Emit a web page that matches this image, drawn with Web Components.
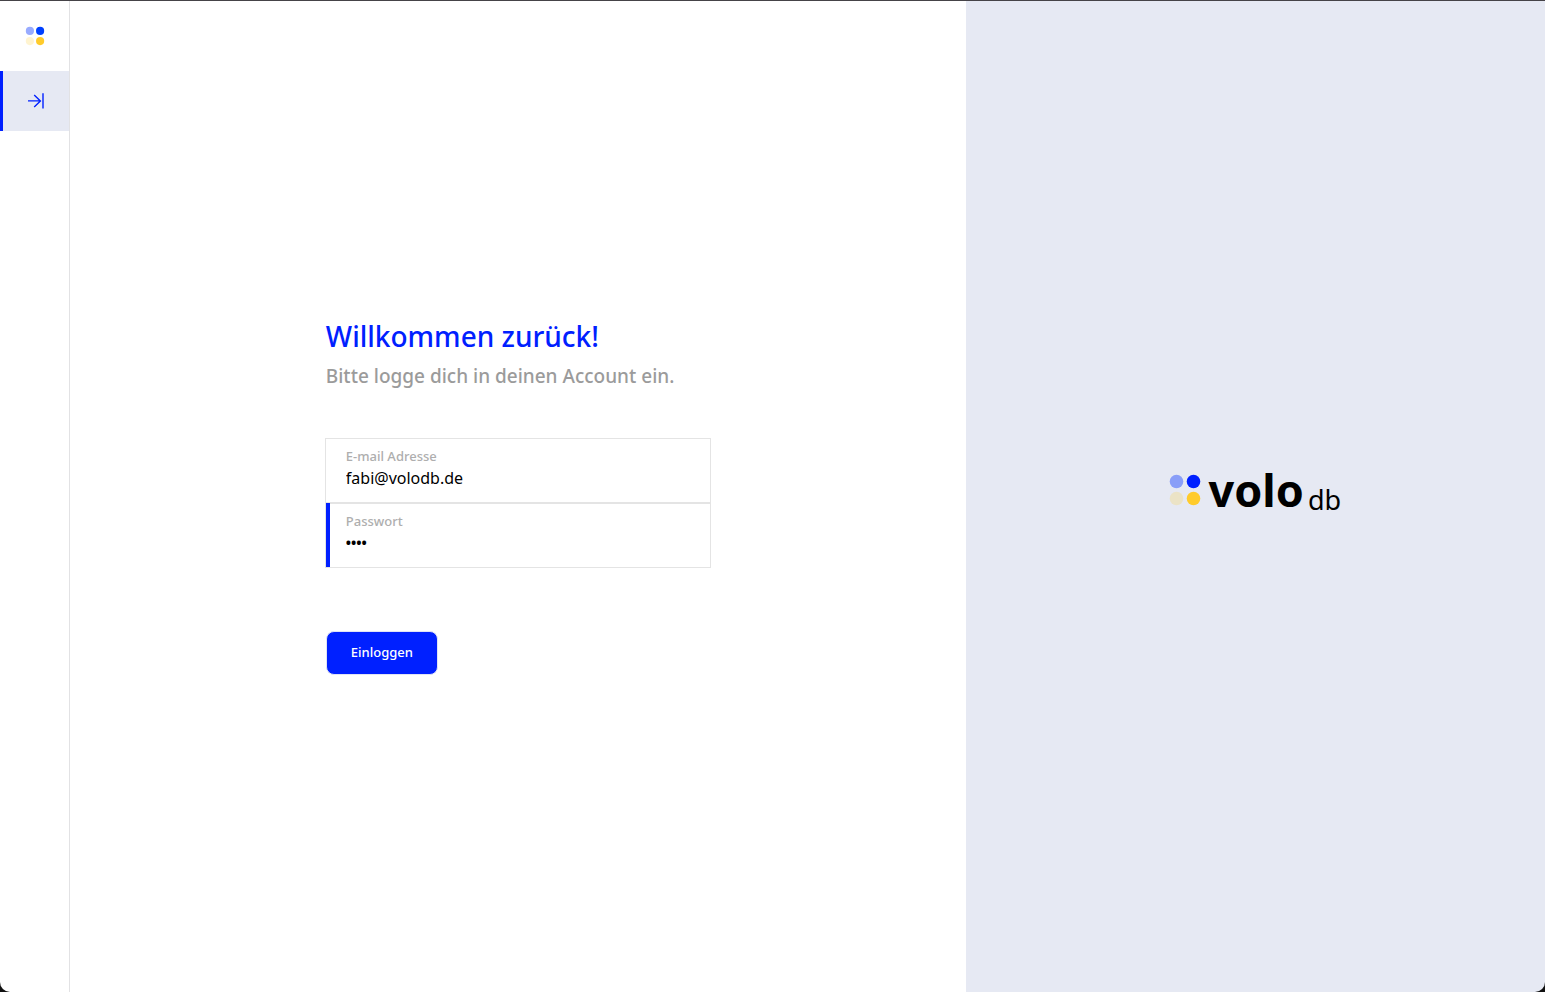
<!DOCTYPE html>
<html lang="de">
<head>
<meta charset="utf-8">
<title>volo db – Login</title>
<style>
  html { height: 100%; background: #111; }
  body { margin: 0; height: 100%; font-family: "Noto Sans", "Open Sans", sans-serif; color: #000; }
</style>
</head>
<body>
<volo-app></volo-app>
<script>
const define = (name, html, setup) => customElements.define(name, class extends HTMLElement {
  constructor() {
    super();
    const root = this.attachShadow({ mode: "open" });
    const template = document.createElement("template");
    template.innerHTML = html;
    root.append(template.content.cloneNode(true));
  }
  connectedCallback() { if (setup) setup(this, this.shadowRoot); }
});

define("volo-dots", `
  <style>
    :host { display: block; width: 18px; height: 18px; }
    svg { display: block; width: 100%; height: 100%; overflow: visible; }
  </style>
  <svg viewBox="0 0 30 30" aria-hidden="true">
    <circle cx="6.5" cy="6.5" r="6.8" fill="#0433ff" fill-opacity=".41"/>
    <circle cx="23.5" cy="6.5" r="6.8" fill="var(--dot, #0020ff)"/>
    <circle cx="6.5" cy="23.5" r="6.8" fill="#ffcb2b" fill-opacity=".22"/>
    <circle cx="23.5" cy="23.5" r="6.8" fill="#ffcb2b"/>
  </svg>`);

define("volo-sidebar", `
  <style>
    :host { display: flex; flex-direction: column; box-sizing: border-box; flex: 0 0 70px; border-right: 1px solid #e2e2e4; background: #fff; }
    .brand { height: 70px; display: grid; place-items: center; --dot: #0040ff; }
    .item { box-sizing: border-box; height: 60px; display: grid; place-items: center; border-left: 3px solid #0020ff; background: #e6e9f3; }
    svg { display: block; }
  </style>
  <a class="brand" href="#" aria-label="Startseite"><volo-dots></volo-dots></a>
  <nav>
    <a class="item" href="#login" aria-label="Einloggen">
      <svg width="18" height="18" viewBox="0 0 18 18" fill="none" stroke="#0020ff" stroke-width="1.4">
        <path d="M1 8.9H13.6M7.2 2.9L13.4 8.9L7.2 14.9M16 1.3V16.6"/>
      </svg>
    </a>
  </nav>`);

define("volo-field", `
  <style>
    :host { display: block; }
    label { position: relative; display: flex; flex-direction: column; box-sizing: border-box; height: 65px; padding: 7px 20px; border: 1px solid #e4e4e4; background: #fff; }
    :host([active]) label::before { content: ""; position: absolute; top: -1px; bottom: 0; left: 0; width: 4px; background: #0020ff; }
    .caption { color: #aeaeae; font-size: 13px; font-weight: 500; line-height: 20px; }
    input { width: 100%; height: 24px; margin: 0; padding: 0; border: 0; outline: 0; background: none; color: #000; font: 16px/24px "Noto Sans", "Open Sans", sans-serif; }
    input[type=password] { font-size: 14px; font-weight: 700; }
  </style>
  <label><span class="caption"><slot></slot></span><input></label>`,
  (host, root) => {
    const input = root.querySelector("input");
    input.type = host.getAttribute("type");
    input.value = host.getAttribute("value");
  });

define("volo-button", `
  <style>
    :host { display: block; }
    button { display: block; height: 44px; min-width: 112px; padding: 0 24px 2px; border: 1px solid #e0e3f5; border-radius: 8px; background: #0020ff; color: #fff; font: 500 13px/20px "Noto Sans", "Open Sans", sans-serif; }
  </style>
  <button type="button"><slot></slot></button>`);

define("volo-login", `
  <style>
    :host { display: grid; place-items: center; flex: 1; background: #fff; }
    form { width: 386px; }
    header, footer { padding-left: 1px; }
    h1 { margin: 0; color: #0020ff; font-size: 28px; line-height: 36px; font-weight: 500; white-space: nowrap; }
    p { margin: 4px 0 44px; color: #9b9b9b; font-size: 19px; line-height: 36px; font-weight: 500; white-space: nowrap; }
    footer { padding-top: 63px; }
  </style>
  <form>
    <header>
      <h1>Willkommen zurück!</h1>
      <p>Bitte logge dich in deinen Account ein.</p>
    </header>
    <volo-field type="email" value="fabi@volodb.de">E-mail Adresse</volo-field>
    <volo-field type="password" value="volo" active>Passwort</volo-field>
    <footer><volo-button>Einloggen</volo-button></footer>
  </form>`);

define("volo-brand", `
  <style>
    :host { display: flex; align-items: center; justify-content: center; box-sizing: border-box; flex: 0 0 37.5%; padding-bottom: 14px; background: #e6e9f3; }
    .logo { display: flex; align-items: center; gap: 9px; }
    volo-dots { width: 30px; height: 30px; }
    .word { display: flex; align-items: flex-end; gap: 4px; }
    strong { font-size: 45px; line-height: 56px; font-weight: 700; }
    .db { font-size: 27px; line-height: 36px; }
  </style>
  <div class="logo"><volo-dots></volo-dots><div class="word"><strong>volo</strong><span class="db">db</span></div></div>`);

define("volo-app", `
  <style>
    :host { display: flex; box-sizing: border-box; min-height: 100%; border-top: 1px solid #454347; border-radius: 0 0 10px 10px; overflow: hidden; }
  </style>
  <volo-sidebar></volo-sidebar>
  <volo-login></volo-login>
  <volo-brand></volo-brand>`);
</script>
</body>
</html>
